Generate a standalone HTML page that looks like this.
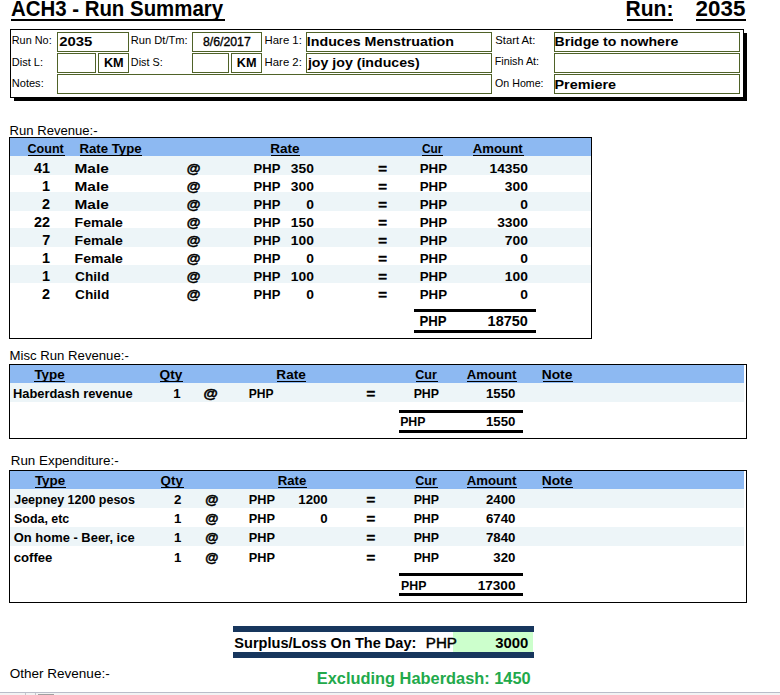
<!DOCTYPE html><html><head><meta charset="utf-8"><style>html,body{margin:0;padding:0;background:#fff;width:780px;height:695px;overflow:hidden}svg{display:block}text{font-family:"Liberation Sans",sans-serif}</style></head><body>
<svg width="780" height="695" viewBox="0 0 780 695" shape-rendering="crispEdges">
<rect x="0" y="0" width="780" height="695" fill="#fff"/>
<rect x="14" y="98" width="733" height="3" fill="#000"/>
<rect x="744" y="33" width="3" height="68" fill="#000"/>
<rect x="10" y="29" width="734" height="1" fill="#000"/>
<rect x="10" y="97" width="734" height="1" fill="#000"/>
<rect x="10" y="29" width="1" height="69" fill="#000"/>
<rect x="743" y="29" width="1" height="69" fill="#000"/>
<rect x="57" y="32" width="72" height="1" fill="#4f6228"/>
<rect x="57" y="51" width="72" height="1" fill="#4f6228"/>
<rect x="57" y="32" width="1" height="20" fill="#4f6228"/>
<rect x="128" y="32" width="1" height="20" fill="#4f6228"/>
<rect x="192" y="32" width="70" height="1" fill="#4f6228"/>
<rect x="192" y="51" width="70" height="1" fill="#4f6228"/>
<rect x="192" y="32" width="1" height="20" fill="#4f6228"/>
<rect x="261" y="32" width="1" height="20" fill="#4f6228"/>
<rect x="306" y="32" width="186" height="1" fill="#4f6228"/>
<rect x="306" y="51" width="186" height="1" fill="#4f6228"/>
<rect x="306" y="32" width="1" height="20" fill="#4f6228"/>
<rect x="491" y="32" width="1" height="20" fill="#4f6228"/>
<rect x="554" y="32" width="186" height="1" fill="#4f6228"/>
<rect x="554" y="51" width="186" height="1" fill="#4f6228"/>
<rect x="554" y="32" width="1" height="20" fill="#4f6228"/>
<rect x="739" y="32" width="1" height="20" fill="#4f6228"/>
<rect x="57" y="53" width="39" height="1" fill="#4f6228"/>
<rect x="57" y="72" width="39" height="1" fill="#4f6228"/>
<rect x="57" y="53" width="1" height="20" fill="#4f6228"/>
<rect x="95" y="53" width="1" height="20" fill="#4f6228"/>
<rect x="98" y="53" width="31" height="1" fill="#4f6228"/>
<rect x="98" y="72" width="31" height="1" fill="#4f6228"/>
<rect x="98" y="53" width="1" height="20" fill="#4f6228"/>
<rect x="128" y="53" width="1" height="20" fill="#4f6228"/>
<rect x="192" y="53" width="37" height="1" fill="#4f6228"/>
<rect x="192" y="72" width="37" height="1" fill="#4f6228"/>
<rect x="192" y="53" width="1" height="20" fill="#4f6228"/>
<rect x="228" y="53" width="1" height="20" fill="#4f6228"/>
<rect x="231" y="53" width="31" height="1" fill="#4f6228"/>
<rect x="231" y="72" width="31" height="1" fill="#4f6228"/>
<rect x="231" y="53" width="1" height="20" fill="#4f6228"/>
<rect x="261" y="53" width="1" height="20" fill="#4f6228"/>
<rect x="306" y="53" width="186" height="1" fill="#4f6228"/>
<rect x="306" y="72" width="186" height="1" fill="#4f6228"/>
<rect x="306" y="53" width="1" height="20" fill="#4f6228"/>
<rect x="491" y="53" width="1" height="20" fill="#4f6228"/>
<rect x="554" y="53" width="186" height="1" fill="#4f6228"/>
<rect x="554" y="72" width="186" height="1" fill="#4f6228"/>
<rect x="554" y="53" width="1" height="20" fill="#4f6228"/>
<rect x="739" y="53" width="1" height="20" fill="#4f6228"/>
<rect x="57" y="74" width="435" height="1" fill="#4f6228"/>
<rect x="57" y="93" width="435" height="1" fill="#4f6228"/>
<rect x="57" y="74" width="1" height="20" fill="#4f6228"/>
<rect x="491" y="74" width="1" height="20" fill="#4f6228"/>
<rect x="554" y="74" width="186" height="1" fill="#4f6228"/>
<rect x="554" y="93" width="186" height="1" fill="#4f6228"/>
<rect x="554" y="74" width="1" height="20" fill="#4f6228"/>
<rect x="739" y="74" width="1" height="20" fill="#4f6228"/>
<rect x="10" y="138" width="581" height="18" fill="#8db9f2"/>
<rect x="10" y="156" width="581" height="19" fill="#edf5f8"/>
<rect x="10" y="192" width="581" height="19" fill="#edf5f8"/>
<rect x="10" y="228" width="581" height="19" fill="#edf5f8"/>
<rect x="10" y="265" width="581" height="18" fill="#edf5f8"/>
<rect x="9" y="137" width="583" height="1" fill="#000"/>
<rect x="9" y="338" width="583" height="1" fill="#000"/>
<rect x="9" y="137" width="1" height="202" fill="#000"/>
<rect x="591" y="137" width="1" height="202" fill="#000"/>
<rect x="414" y="309" width="122" height="3" fill="#000"/>
<rect x="414" y="330" width="122" height="3" fill="#000"/>
<rect x="10" y="365" width="734" height="18" fill="#8db9f2"/>
<rect x="10" y="383" width="734" height="19" fill="#edf5f8"/>
<rect x="9" y="364" width="738" height="1" fill="#000"/>
<rect x="9" y="438" width="738" height="1" fill="#000"/>
<rect x="9" y="364" width="1" height="75" fill="#000"/>
<rect x="746" y="364" width="1" height="75" fill="#000"/>
<rect x="399" y="410" width="124" height="3" fill="#000"/>
<rect x="399" y="430" width="124" height="3" fill="#000"/>
<rect x="10" y="471" width="734" height="18" fill="#8db9f2"/>
<rect x="10" y="489" width="734" height="19" fill="#edf5f8"/>
<rect x="10" y="527" width="734" height="19" fill="#edf5f8"/>
<rect x="9" y="470" width="738" height="1" fill="#000"/>
<rect x="9" y="602" width="738" height="1" fill="#000"/>
<rect x="9" y="470" width="1" height="133" fill="#000"/>
<rect x="746" y="470" width="1" height="133" fill="#000"/>
<rect x="399" y="573" width="124" height="3" fill="#000"/>
<rect x="399" y="593" width="124" height="3" fill="#000"/>
<rect x="233" y="626" width="301" height="6" fill="#17365d"/>
<rect x="233" y="652" width="301" height="6" fill="#17365d"/>
<rect x="453" y="632" width="80" height="20" fill="#ccffcc"/>
<rect x="0" y="692" width="780" height="1" fill="#b9bdc9"/>
<rect x="0" y="693" width="780" height="2" fill="#f3f3f3"/>
<rect x="25" y="693" width="1" height="2" fill="#c6c6cc"/>
<rect x="35" y="693" width="1" height="2" fill="#c6c6cc"/>
<rect x="38" y="694" width="16" height="1" fill="#a0a0a0"/>
<rect x="11" y="19" width="214" height="2" fill="#000"/>
<rect x="627" y="19" width="46" height="2" fill="#000"/>
<rect x="696" y="19" width="50" height="2" fill="#000"/>
<rect x="28" y="155" width="37" height="1" fill="#000"/>
<rect x="80" y="155" width="62" height="1" fill="#000"/>
<rect x="271" y="155" width="29" height="1" fill="#000"/>
<rect x="422" y="155" width="21" height="1" fill="#000"/>
<rect x="473" y="155" width="51" height="1" fill="#000"/>
<rect x="34" y="381" width="31" height="1" fill="#000"/>
<rect x="160" y="381" width="23" height="1" fill="#000"/>
<rect x="277" y="381" width="29" height="1" fill="#000"/>
<rect x="416" y="381" width="22" height="1" fill="#000"/>
<rect x="467" y="381" width="50" height="1" fill="#000"/>
<rect x="543" y="381" width="30" height="1" fill="#000"/>
<rect x="35" y="487" width="31" height="1" fill="#000"/>
<rect x="161" y="487" width="23" height="1" fill="#000"/>
<rect x="278" y="487" width="29" height="1" fill="#000"/>
<rect x="416" y="487" width="22" height="1" fill="#000"/>
<rect x="467" y="487" width="50" height="1" fill="#000"/>
<rect x="543" y="487" width="30" height="1" fill="#000"/>
<text transform="matrix(0.9581,0,0,1,10.88,16)" font-size="21.33" font-weight="bold" fill="#000">ACH3 - Run Summary</text>
<text transform="matrix(0.9875,0,0,1,625.48,16)" font-size="21.33" font-weight="bold" fill="#000">Run:</text>
<text transform="matrix(1.0484,0,0,1,695.60,16)" font-size="21.33" font-weight="bold" fill="#000">2035</text>
<text transform="matrix(0.9568,0,0,1,11.75,43.9)" font-size="11.38" font-weight="normal" fill="#000">Run No:</text>
<text transform="matrix(0.9661,0,0,1,11.84,65.8)" font-size="11.38" font-weight="normal" fill="#000">Dist L:</text>
<text transform="matrix(0.9720,0,0,1,11.74,86.9)" font-size="11.38" font-weight="normal" fill="#000">Notes:</text>
<text transform="matrix(0.9779,0,0,1,130.83,43.9)" font-size="11.38" font-weight="normal" fill="#000">Run Dt/Tm:</text>
<text transform="matrix(0.9497,0,0,1,130.86,65.8)" font-size="11.38" font-weight="normal" fill="#000">Dist S:</text>
<text transform="matrix(0.9973,0,0,1,264.61,43.9)" font-size="11.38" font-weight="normal" fill="#000">Hare 1:</text>
<text transform="matrix(0.9973,0,0,1,264.61,65.8)" font-size="11.38" font-weight="normal" fill="#000">Hare 2:</text>
<text transform="matrix(0.9895,0,0,1,495.25,44.1)" font-size="11.38" font-weight="normal" fill="#000">Start At:</text>
<text transform="matrix(0.9471,0,0,1,494.76,65.4)" font-size="11.38" font-weight="normal" fill="#000">Finish At:</text>
<text transform="matrix(0.9346,0,0,1,495.10,86.9)" font-size="11.38" font-weight="normal" fill="#000">On Home:</text>
<text transform="matrix(1.1901,0,0,1,59.13,45.8)" font-size="12.52" font-weight="bold" fill="#000">2035</text>
<text transform="matrix(1.0148,0,0,1,103.91,66.7)" font-size="12.52" font-weight="bold" fill="#000">KM</text>
<text transform="matrix(0.9829,0,0,1,202.92,45.8)" font-size="12.52" font-weight="normal" fill="#000" stroke="#000" stroke-width="0.35">8/6/2017</text>
<text transform="matrix(1.0148,0,0,1,236.71,66.7)" font-size="12.52" font-weight="bold" fill="#000">KM</text>
<text transform="matrix(1.1379,0,0,1,306.81,45.8)" font-size="12.52" font-weight="bold" fill="#000">Induces Menstruation</text>
<text transform="matrix(1.1321,0,0,1,307.92,66.7)" font-size="12.52" font-weight="bold" fill="#000">joy joy (induces)</text>
<text transform="matrix(1.1271,0,0,1,554.52,45.9)" font-size="12.52" font-weight="bold" fill="#000">Bridge to nowhere</text>
<text transform="matrix(1.1471,0,0,1,554.50,88.5)" font-size="12.52" font-weight="bold" fill="#000">Premiere</text>
<text transform="matrix(1.0835,0,0,1,9.58,134.7)" font-size="12.09" font-weight="normal" fill="#000">Run Revenue:-</text>
<text transform="matrix(1.0903,0,0,1,9.57,359.9)" font-size="12.09" font-weight="normal" fill="#000">Misc Run Revenue:-</text>
<text transform="matrix(1.1087,0,0,1,10.75,464.9)" font-size="12.09" font-weight="normal" fill="#000">Run Expenditure:-</text>
<text transform="matrix(1.1192,0,0,1,9.67,678.3)" font-size="12.09" font-weight="normal" fill="#000">Other Revenue:-</text>
<text transform="matrix(0.9221,0,0,1,27.51,152.7)" font-size="13.65" font-weight="bold" fill="#000">Count</text>
<text transform="matrix(0.9675,0,0,1,79.47,152.7)" font-size="13.65" font-weight="bold" fill="#000">Rate Type</text>
<text transform="matrix(0.9930,0,0,1,270.15,152.7)" font-size="13.65" font-weight="bold" fill="#000">Rate</text>
<text transform="matrix(0.8736,0,0,1,421.93,152.7)" font-size="13.65" font-weight="bold" fill="#000">Cur</text>
<text transform="matrix(0.9671,0,0,1,472.79,152.7)" font-size="13.65" font-weight="bold" fill="#000">Amount</text>
<text transform="matrix(1.0135,0,0,1,33.93,172.7)" font-size="14.22" font-weight="bold" fill="#000">41</text>
<text transform="matrix(1.1283,0,0,1,74.54,172.7)" font-size="13.65" font-weight="bold" fill="#000">Male</text>
<text transform="matrix(1.0296,0,0,1,186.84,172.7)" font-size="13.65" font-weight="bold" fill="#000" stroke="#000" stroke-width="0.5">@</text>
<text transform="matrix(0.9531,0,0,1,253.59,172.7)" font-size="13.65" font-weight="bold" fill="#000">PHP</text>
<text transform="matrix(1.0135,0,0,1,290.77,172.7)" font-size="13.65" font-weight="bold" fill="#000">350</text>
<text transform="matrix(1.0937,0,0,1,378.23,172.7)" font-size="13.65" font-weight="bold" fill="#000" stroke="#000" stroke-width="0.5">=</text>
<text transform="matrix(0.9754,0,0,1,419.67,172.7)" font-size="13.65" font-weight="bold" fill="#000">PHP</text>
<text transform="matrix(1.0135,0,0,1,489.48,172.7)" font-size="13.65" font-weight="bold" fill="#000">14350</text>
<text transform="matrix(1.0135,0,0,1,41.94,190.7)" font-size="14.22" font-weight="bold" fill="#000">1</text>
<text transform="matrix(1.1283,0,0,1,74.54,190.7)" font-size="13.65" font-weight="bold" fill="#000">Male</text>
<text transform="matrix(1.0296,0,0,1,186.84,190.7)" font-size="13.65" font-weight="bold" fill="#000" stroke="#000" stroke-width="0.5">@</text>
<text transform="matrix(0.9531,0,0,1,253.59,190.7)" font-size="13.65" font-weight="bold" fill="#000">PHP</text>
<text transform="matrix(1.0135,0,0,1,290.77,190.7)" font-size="13.65" font-weight="bold" fill="#000">300</text>
<text transform="matrix(1.0937,0,0,1,378.23,190.7)" font-size="13.65" font-weight="bold" fill="#000" stroke="#000" stroke-width="0.5">=</text>
<text transform="matrix(0.9754,0,0,1,419.67,190.7)" font-size="13.65" font-weight="bold" fill="#000">PHP</text>
<text transform="matrix(1.0135,0,0,1,504.87,190.7)" font-size="13.65" font-weight="bold" fill="#000">300</text>
<text transform="matrix(1.0135,0,0,1,41.94,208.7)" font-size="14.22" font-weight="bold" fill="#000">2</text>
<text transform="matrix(1.1283,0,0,1,74.54,208.7)" font-size="13.65" font-weight="bold" fill="#000">Male</text>
<text transform="matrix(1.0296,0,0,1,186.84,208.7)" font-size="13.65" font-weight="bold" fill="#000" stroke="#000" stroke-width="0.5">@</text>
<text transform="matrix(0.9531,0,0,1,253.59,208.7)" font-size="13.65" font-weight="bold" fill="#000">PHP</text>
<text transform="matrix(1.0135,0,0,1,306.16,208.7)" font-size="13.65" font-weight="bold" fill="#000">0</text>
<text transform="matrix(1.0937,0,0,1,378.23,208.7)" font-size="13.65" font-weight="bold" fill="#000" stroke="#000" stroke-width="0.5">=</text>
<text transform="matrix(0.9754,0,0,1,419.67,208.7)" font-size="13.65" font-weight="bold" fill="#000">PHP</text>
<text transform="matrix(1.0135,0,0,1,520.26,208.7)" font-size="13.65" font-weight="bold" fill="#000">0</text>
<text transform="matrix(1.0135,0,0,1,33.93,226.7)" font-size="14.22" font-weight="bold" fill="#000">22</text>
<text transform="matrix(1.0270,0,0,1,74.62,226.7)" font-size="13.65" font-weight="bold" fill="#000">Female</text>
<text transform="matrix(1.0296,0,0,1,186.84,226.7)" font-size="13.65" font-weight="bold" fill="#000" stroke="#000" stroke-width="0.5">@</text>
<text transform="matrix(0.9531,0,0,1,253.59,226.7)" font-size="13.65" font-weight="bold" fill="#000">PHP</text>
<text transform="matrix(1.0135,0,0,1,290.77,226.7)" font-size="13.65" font-weight="bold" fill="#000">150</text>
<text transform="matrix(1.0937,0,0,1,378.23,226.7)" font-size="13.65" font-weight="bold" fill="#000" stroke="#000" stroke-width="0.5">=</text>
<text transform="matrix(0.9754,0,0,1,419.67,226.7)" font-size="13.65" font-weight="bold" fill="#000">PHP</text>
<text transform="matrix(1.0135,0,0,1,497.18,226.7)" font-size="13.65" font-weight="bold" fill="#000">3300</text>
<text transform="matrix(1.0135,0,0,1,42.17,244.7)" font-size="14.22" font-weight="bold" fill="#000">7</text>
<text transform="matrix(1.0270,0,0,1,74.62,244.7)" font-size="13.65" font-weight="bold" fill="#000">Female</text>
<text transform="matrix(1.0296,0,0,1,186.84,244.7)" font-size="13.65" font-weight="bold" fill="#000" stroke="#000" stroke-width="0.5">@</text>
<text transform="matrix(0.9531,0,0,1,253.59,244.7)" font-size="13.65" font-weight="bold" fill="#000">PHP</text>
<text transform="matrix(1.0135,0,0,1,290.77,244.7)" font-size="13.65" font-weight="bold" fill="#000">100</text>
<text transform="matrix(1.0937,0,0,1,378.23,244.7)" font-size="13.65" font-weight="bold" fill="#000" stroke="#000" stroke-width="0.5">=</text>
<text transform="matrix(0.9754,0,0,1,419.67,244.7)" font-size="13.65" font-weight="bold" fill="#000">PHP</text>
<text transform="matrix(1.0135,0,0,1,504.87,244.7)" font-size="13.65" font-weight="bold" fill="#000">700</text>
<text transform="matrix(1.0135,0,0,1,41.94,262.7)" font-size="14.22" font-weight="bold" fill="#000">1</text>
<text transform="matrix(1.0270,0,0,1,74.62,262.7)" font-size="13.65" font-weight="bold" fill="#000">Female</text>
<text transform="matrix(1.0296,0,0,1,186.84,262.7)" font-size="13.65" font-weight="bold" fill="#000" stroke="#000" stroke-width="0.5">@</text>
<text transform="matrix(0.9531,0,0,1,253.59,262.7)" font-size="13.65" font-weight="bold" fill="#000">PHP</text>
<text transform="matrix(1.0135,0,0,1,306.16,262.7)" font-size="13.65" font-weight="bold" fill="#000">0</text>
<text transform="matrix(1.0937,0,0,1,378.23,262.7)" font-size="13.65" font-weight="bold" fill="#000" stroke="#000" stroke-width="0.5">=</text>
<text transform="matrix(0.9754,0,0,1,419.67,262.7)" font-size="13.65" font-weight="bold" fill="#000">PHP</text>
<text transform="matrix(1.0135,0,0,1,520.26,262.7)" font-size="13.65" font-weight="bold" fill="#000">0</text>
<text transform="matrix(1.0135,0,0,1,41.94,280.7)" font-size="14.22" font-weight="bold" fill="#000">1</text>
<text transform="matrix(1.0022,0,0,1,75.07,280.7)" font-size="13.65" font-weight="bold" fill="#000">Child</text>
<text transform="matrix(1.0296,0,0,1,186.84,280.7)" font-size="13.65" font-weight="bold" fill="#000" stroke="#000" stroke-width="0.5">@</text>
<text transform="matrix(0.9531,0,0,1,253.59,280.7)" font-size="13.65" font-weight="bold" fill="#000">PHP</text>
<text transform="matrix(1.0135,0,0,1,290.77,280.7)" font-size="13.65" font-weight="bold" fill="#000">100</text>
<text transform="matrix(1.0937,0,0,1,378.23,280.7)" font-size="13.65" font-weight="bold" fill="#000" stroke="#000" stroke-width="0.5">=</text>
<text transform="matrix(0.9754,0,0,1,419.67,280.7)" font-size="13.65" font-weight="bold" fill="#000">PHP</text>
<text transform="matrix(1.0135,0,0,1,504.87,280.7)" font-size="13.65" font-weight="bold" fill="#000">100</text>
<text transform="matrix(1.0135,0,0,1,41.94,298.7)" font-size="14.22" font-weight="bold" fill="#000">2</text>
<text transform="matrix(1.0022,0,0,1,75.07,298.7)" font-size="13.65" font-weight="bold" fill="#000">Child</text>
<text transform="matrix(1.0296,0,0,1,186.84,298.7)" font-size="13.65" font-weight="bold" fill="#000" stroke="#000" stroke-width="0.5">@</text>
<text transform="matrix(0.9531,0,0,1,253.59,298.7)" font-size="13.65" font-weight="bold" fill="#000">PHP</text>
<text transform="matrix(1.0135,0,0,1,306.16,298.7)" font-size="13.65" font-weight="bold" fill="#000">0</text>
<text transform="matrix(1.0937,0,0,1,378.23,298.7)" font-size="13.65" font-weight="bold" fill="#000" stroke="#000" stroke-width="0.5">=</text>
<text transform="matrix(0.9754,0,0,1,419.67,298.7)" font-size="13.65" font-weight="bold" fill="#000">PHP</text>
<text transform="matrix(1.0135,0,0,1,520.26,298.7)" font-size="13.65" font-weight="bold" fill="#000">0</text>
<text transform="matrix(0.9293,0,0,1,419.47,326)" font-size="14.22" font-weight="bold" fill="#000">PHP</text>
<text transform="matrix(1.0188,0,0,1,487.59,326)" font-size="14.22" font-weight="bold" fill="#000">18750</text>
<text transform="matrix(1.0149,0,0,1,34.40,379.0)" font-size="13.23" font-weight="bold" fill="#000">Type</text>
<text transform="matrix(1.0313,0,0,1,159.57,379.0)" font-size="13.23" font-weight="bold" fill="#000">Qty</text>
<text transform="matrix(1.0250,0,0,1,276.35,379.0)" font-size="13.23" font-weight="bold" fill="#000">Rate</text>
<text transform="matrix(0.9514,0,0,1,415.21,379.0)" font-size="13.23" font-weight="bold" fill="#000">Cur</text>
<text transform="matrix(0.9963,0,0,1,466.69,379.0)" font-size="13.23" font-weight="bold" fill="#000">Amount</text>
<text transform="matrix(1.0412,0,0,1,541.74,379.0)" font-size="13.23" font-weight="bold" fill="#000">Note</text>
<text transform="matrix(0.9752,0,0,1,12.99,397.6)" font-size="13.23" font-weight="bold" fill="#000">Haberdash revenue</text>
<text transform="matrix(1.0016,0,0,1,173.26,397.6)" font-size="13.23" font-weight="bold" fill="#000">1</text>
<text transform="matrix(1.1060,0,0,1,203.41,397.6)" font-size="13.23" font-weight="bold" fill="#000" stroke="#000" stroke-width="0.5">@</text>
<text transform="matrix(0.9147,0,0,1,248.74,397.6)" font-size="13.23" font-weight="bold" fill="#000">PHP</text>
<text transform="matrix(1.1290,0,0,1,366.43,397.6)" font-size="13.23" font-weight="bold" fill="#000" stroke="#000" stroke-width="0.5">=</text>
<text transform="matrix(0.9339,0,0,1,413.63,397.6)" font-size="13.23" font-weight="bold" fill="#000">PHP</text>
<text transform="matrix(1.0016,0,0,1,485.96,397.6)" font-size="13.23" font-weight="bold" fill="#000">1550</text>
<text transform="matrix(0.9339,0,0,1,400.13,425.9)" font-size="13.23" font-weight="bold" fill="#000">PHP</text>
<text transform="matrix(1.0016,0,0,1,485.96,425.9)" font-size="13.23" font-weight="bold" fill="#000">1550</text>
<text transform="matrix(1.0149,0,0,1,34.90,485.4)" font-size="13.23" font-weight="bold" fill="#000">Type</text>
<text transform="matrix(1.0083,0,0,1,160.58,485.4)" font-size="13.23" font-weight="bold" fill="#000">Qty</text>
<text transform="matrix(0.9959,0,0,1,277.68,485.4)" font-size="13.23" font-weight="bold" fill="#000">Rate</text>
<text transform="matrix(0.9514,0,0,1,415.21,485.4)" font-size="13.23" font-weight="bold" fill="#000">Cur</text>
<text transform="matrix(0.9963,0,0,1,466.69,485.4)" font-size="13.23" font-weight="bold" fill="#000">Amount</text>
<text transform="matrix(1.0412,0,0,1,541.74,485.4)" font-size="13.23" font-weight="bold" fill="#000">Note</text>
<text transform="matrix(0.9435,0,0,1,14.20,503.7)" font-size="13.23" font-weight="bold" fill="#000">Jeepney 1200 pesos</text>
<text transform="matrix(1.0016,0,0,1,173.96,503.7)" font-size="13.23" font-weight="bold" fill="#000">2</text>
<text transform="matrix(1.0196,0,0,1,205.27,503.7)" font-size="13.23" font-weight="bold" fill="#000" stroke="#000" stroke-width="0.5">@</text>
<text transform="matrix(0.9646,0,0,1,248.70,503.7)" font-size="13.23" font-weight="bold" fill="#000">PHP</text>
<text transform="matrix(1.0016,0,0,1,298.26,503.7)" font-size="13.23" font-weight="bold" fill="#000">1200</text>
<text transform="matrix(1.1290,0,0,1,366.43,503.7)" font-size="13.23" font-weight="bold" fill="#000" stroke="#000" stroke-width="0.5">=</text>
<text transform="matrix(0.9339,0,0,1,413.63,503.7)" font-size="13.23" font-weight="bold" fill="#000">PHP</text>
<text transform="matrix(1.0016,0,0,1,485.96,503.7)" font-size="13.23" font-weight="bold" fill="#000">2400</text>
<text transform="matrix(0.9405,0,0,1,14.01,522.8)" font-size="13.23" font-weight="bold" fill="#000">Soda, etc</text>
<text transform="matrix(1.0016,0,0,1,173.96,522.8)" font-size="13.23" font-weight="bold" fill="#000">1</text>
<text transform="matrix(1.0196,0,0,1,205.27,522.8)" font-size="13.23" font-weight="bold" fill="#000" stroke="#000" stroke-width="0.5">@</text>
<text transform="matrix(0.9646,0,0,1,248.70,522.8)" font-size="13.23" font-weight="bold" fill="#000">PHP</text>
<text transform="matrix(1.0016,0,0,1,320.37,522.8)" font-size="13.23" font-weight="bold" fill="#000">0</text>
<text transform="matrix(1.1290,0,0,1,366.43,522.8)" font-size="13.23" font-weight="bold" fill="#000" stroke="#000" stroke-width="0.5">=</text>
<text transform="matrix(0.9339,0,0,1,413.63,522.8)" font-size="13.23" font-weight="bold" fill="#000">PHP</text>
<text transform="matrix(1.0016,0,0,1,485.96,522.8)" font-size="13.23" font-weight="bold" fill="#000">6740</text>
<text transform="matrix(0.9792,0,0,1,13.80,541.5)" font-size="13.23" font-weight="bold" fill="#000">On home - Beer, ice</text>
<text transform="matrix(1.0016,0,0,1,173.96,541.5)" font-size="13.23" font-weight="bold" fill="#000">1</text>
<text transform="matrix(1.0196,0,0,1,205.27,541.5)" font-size="13.23" font-weight="bold" fill="#000" stroke="#000" stroke-width="0.5">@</text>
<text transform="matrix(0.9646,0,0,1,248.70,541.5)" font-size="13.23" font-weight="bold" fill="#000">PHP</text>
<text transform="matrix(1.1290,0,0,1,366.43,541.5)" font-size="13.23" font-weight="bold" fill="#000" stroke="#000" stroke-width="0.5">=</text>
<text transform="matrix(0.9339,0,0,1,413.63,541.5)" font-size="13.23" font-weight="bold" fill="#000">PHP</text>
<text transform="matrix(1.0016,0,0,1,485.96,541.5)" font-size="13.23" font-weight="bold" fill="#000">7840</text>
<text transform="matrix(0.9918,0,0,1,13.79,561.9)" font-size="13.23" font-weight="bold" fill="#000">coffee</text>
<text transform="matrix(1.0016,0,0,1,173.96,561.9)" font-size="13.23" font-weight="bold" fill="#000">1</text>
<text transform="matrix(1.0196,0,0,1,205.27,561.9)" font-size="13.23" font-weight="bold" fill="#000" stroke="#000" stroke-width="0.5">@</text>
<text transform="matrix(0.9646,0,0,1,248.70,561.9)" font-size="13.23" font-weight="bold" fill="#000">PHP</text>
<text transform="matrix(1.1290,0,0,1,366.43,561.9)" font-size="13.23" font-weight="bold" fill="#000" stroke="#000" stroke-width="0.5">=</text>
<text transform="matrix(0.9339,0,0,1,413.63,561.9)" font-size="13.23" font-weight="bold" fill="#000">PHP</text>
<text transform="matrix(1.0016,0,0,1,493.33,561.9)" font-size="13.23" font-weight="bold" fill="#000">320</text>
<text transform="matrix(0.9339,0,0,1,401.03,589.9)" font-size="13.23" font-weight="bold" fill="#000">PHP</text>
<text transform="matrix(1.0277,0,0,1,477.65,589.9)" font-size="13.23" font-weight="bold" fill="#000">17300</text>
<text transform="matrix(1.0255,0,0,1,234.27,648)" font-size="14.22" font-weight="bold" fill="#000">Surplus/Loss On The Day:</text>
<text transform="matrix(1.0641,0,0,1,425.82,648)" font-size="14.22" font-weight="normal" fill="#000" stroke="#000" stroke-width="0.45">PHP</text>
<text transform="matrix(1.0473,0,0,1,495.17,648)" font-size="14.22" font-weight="bold" fill="#000">3000</text>
<text transform="matrix(0.9605,0,0,1,316.78,683.5)" font-size="17.07" font-weight="bold" fill="#22a94b">Excluding Haberdash: 1450</text>
</svg></body></html>
